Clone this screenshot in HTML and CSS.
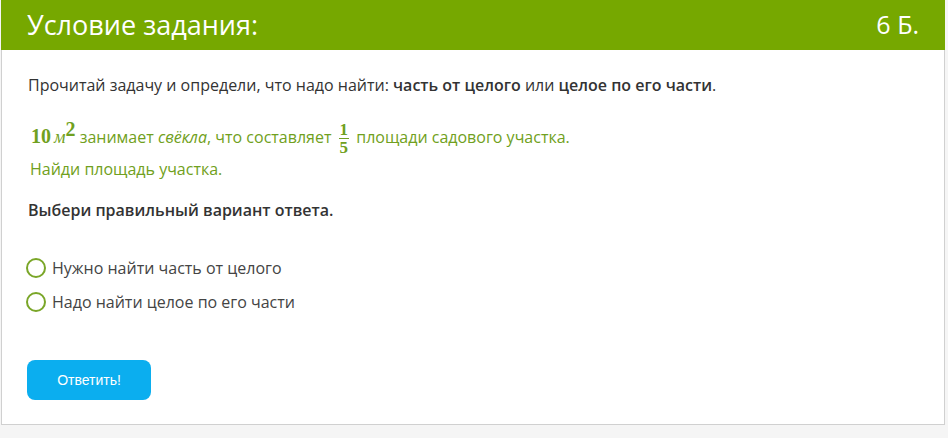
FILE: index.html
```html
<!DOCTYPE html>
<html>
<head>
  <title>Условие задания</title>
  <link rel="stylesheet" href="styles.css">
</head>
<body>
  <div class="task">
    <div class="task-head">
      <span class="task-title">Условие задания:</span>
      <span class="task-points">6 Б.</span>
    </div>
    <div class="task-body">
      <p class="intro">Прочитай задачу и определи, что надо найти: <b>часть от целого</b> или <b>целое по его части</b>.</p>
      <p class="problem">
        <span class="math">10<span class="unit">м</span><sup>2</sup></span> занимает <i>свёкла</i>, что составляет
        <span class="frac"><span class="num">1</span><span class="den">5</span></span> площади садового участка.
      </p>
      <p class="problem second">Найди площадь участка.</p>
      <p class="prompt">Выбери правильный вариант ответа.</p>

      <ul class="options">
        <li><span class="radio"></span>Нужно найти часть от целого</li>
        <li><span class="radio"></span>Надо найти целое по его части</li>
      </ul>

      <button class="answer-btn">Ответить!</button>
    </div>
  </div>
</body>
</html>
```

FILE: styles.css
```css
/* Карточка задания */
body {
  margin: 0;
  background-color: #f5f5f5;
  font-family: "Open Sans", Arial, sans-serif;
  color: #333;
}

.task {
  width: 944px;
  margin-left: 1px;
  background-color: #fff;
  border: 1px solid #d0d0d0;
  border-top: none;
  height: 425px;
  box-sizing: border-box;
}

.task-head {
  display: flex;
  justify-content: space-between;
  align-items: center;
  height: 50px;
  padding: 0 26px 2px 26px;
  margin: 0 -1px;
  box-sizing: border-box;
  background-color: #76a800;
  color: #fff;
  font-size: 27px;
}

.task-points {
  font-size: 25px;
}

.task-body {
  padding: 24px 26px;
}

.task-body p {
  margin: 0;
  font-size: 16px;
  line-height: 22px;
}

.intro b {
  font-weight: 600;
}

.problem {
  color: #70a020;
  margin-top: 25px !important;
  height: 24px;
}

.problem.second {
  margin-top: 13px !important;
  padding-left: 2px;
}

.math {
  font-family: "Liberation Serif", "Times New Roman", serif;
  font-size: 20px;
  font-weight: bold;
  padding-left: 3px;
}

.math .unit {
  font-weight: normal;
  font-style: italic;
  font-size: 18px;
  margin-left: 3px;
}

.math sup {
  font-size: 20px;
  line-height: 0;
  vertical-align: 7px;
}

.problem i {
  font-style: italic;
}

.frac {
  display: inline-flex;
  flex-direction: column;
  vertical-align: middle;
  font-family: "Liberation Serif", "Times New Roman", serif;
  font-weight: bold;
  font-size: 17px;
  line-height: 17px;
  text-align: center;
  margin: 0 3px;
}

.frac .num {
  border-bottom: 1px solid #70a020;
  padding: 0 1px;
}

.prompt {
  font-weight: 600;
  margin-top: 17px !important;
}

.options {
  list-style: none;
  margin: 35px 0 0 -2px;
  padding: 0;
  font-size: 16px;
  color: #444;
}

.options li {
  display: flex;
  align-items: center;
  height: 24px;
  margin-bottom: 10px;
}

.radio {
  width: 16px;
  height: 16px;
  border: 2px solid #7aa628;
  border-radius: 50%;
  margin-right: 6px;
}

.answer-btn {
  margin-top: 36px;
  margin-left: -1px;
  width: 124px;
  height: 40px;
  background-color: #0baeef;
  color: #fff;
  border: none;
  border-radius: 8px;
  font-family: Arial, "Liberation Sans", sans-serif;
  font-size: 14px;
  cursor: pointer;
}
```
